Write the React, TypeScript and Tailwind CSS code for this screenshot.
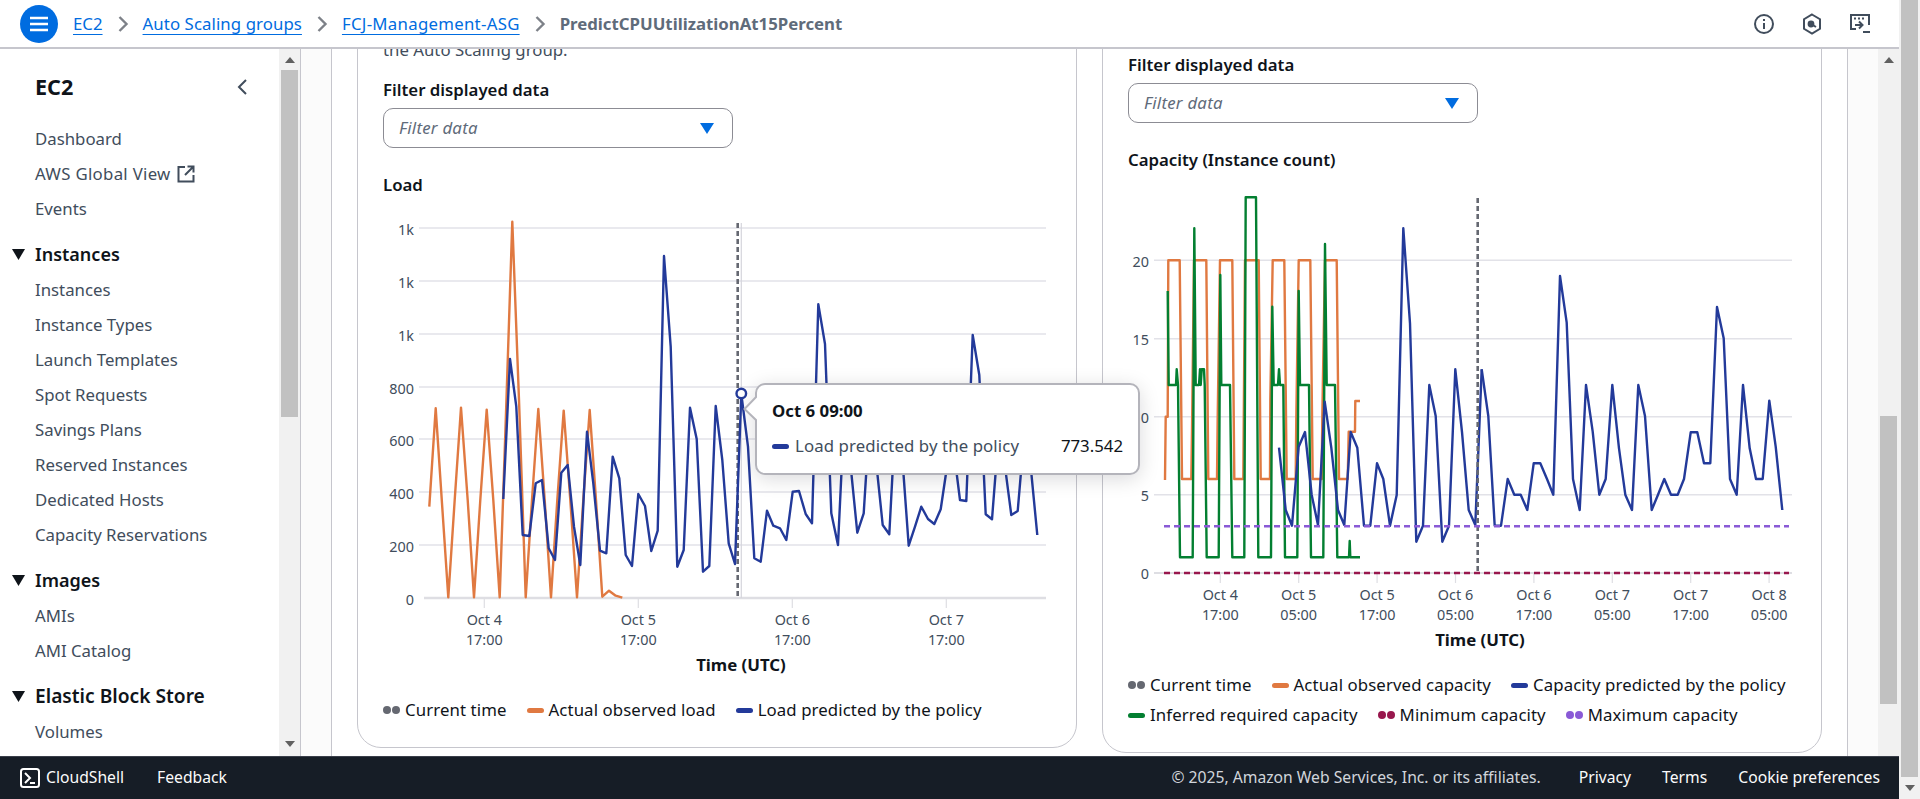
import React from "react";

const FONT = "'Noto Sans', 'Open Sans', sans-serif";
const BLUE = "#233a9a";
const ORANGE = "#e07941";
const GREEN = "#037f31";
const PURPLE = "#8a5ad6";
const RED = "#98174d";
const GRID = "#e2e2e8";
const AXIS = "#414d5c";

// Points read in 3x crop coordinates, converted to page coordinates below.
type P = [number, number];
const toPts = (pts: P[], ox: number, oy: number) =>
  pts.map(([x, y]) => `${(ox + x / 3).toFixed(1)},${(oy + y / 3).toFixed(1)}`).join(" ");

const loadOrange: P[] = [[268,920],[287,625],[306,910],[325,1192],[344,900],[363,623],[383,900],[402,1192],[421,900],[440,629],[460,900],[479,1192],[498,640],[517,65],[537,600],[557,1192],[576,900],[595,627],[614,900],[633,1192],[652,900],[671,632],[691,900],[711,1192],[730,900],[749,630],[768,900],[787,1190],[807,1172],[827,1187],[847,1193]];
const loadBlueA: P[] = [[490,897],[510,477],[529,620],[548,1005],[568,1008],[587,850],[606,840],[626,1045],[645,1080],[664,818],[683,795],[702,980],[721,1095],[741,695],[760,850],[780,1052],[799,1060],[818,770],[838,835],[857,1065],[876,1098],[895,882],[915,918],[934,1053],[953,992],[972,168],[992,440],[1012,1100],[1031,1050],[1050,623],[1070,717],[1089,1115],[1108,1098],[1127,618],[1147,780],[1166,1030],[1185,1092],[1204,582]];
const loadBlueB: P[] = [[124,582],[144,740],[163,1075],[182,1085],[201,932],[220,977],[240,985],[259,1020],[278,875],[297,873],[317,942],[336,970],[355,313],[375,432],[394,940],[414,1035],[433,640],[452,800],[472,998],[491,940],[510,640],[529,790],[548,975],[568,1003],[587,640],[606,760],[626,1037],[645,980],[664,920],[684,957],[703,972],[722,928],[741,800],[760,740],[780,900],[799,903],[818,405],[838,525],[857,943],[876,958],[896,700],[915,800],[934,945],[953,933],[973,700],[992,800],[1012,1005]];

const capOrange: P[] = [[165,900],[167,710],[173,710],[175,241],[209,241],[216,897],[244,897],[246,755],[252,241],[289,241],[295,897],[321,897],[323,710],[330,241],[367,241],[373,897],[400,897],[405,241],[446,241],[452,897],[480,897],[481,660],[488,241],[523,241],[530,897],[557,897],[559,710],[566,241],[601,241],[608,897],[635,897],[637,710],[645,241],[680,241],[687,897],[713,897],[716,755],[735,755],[736,663],[750,663]];
const capGreen: P[] = [[173,333],[176,615],[198,615],[200,568],[204,615],[210,1132],[248,1132],[253,145],[257,615],[267,615],[270,568],[272,615],[275,568],[282,568],[284,615],[290,1132],[326,1132],[331,285],[334,615],[360,615],[367,1132],[403,1132],[407,52],[438,52],[445,1132],[483,1132],[487,380],[491,615],[504,615],[507,568],[510,615],[520,615],[525,1132],[562,1132],[566,333],[570,615],[597,615],[603,1132],[640,1132],[645,192],[650,615],[675,615],[682,1132],[717,1132],[719,1083],[721,1132],[750,1132]];
const capBlueA: P[] = [[507,803],[527,990],[546,1037],[566,800],[585,756],[605,945],[624,1035],[644,665],[664,803],[684,990],[703,1035],[722,756],[742,803],[762,1037],[781,1037],[801,850],[820,897],[840,1037],[860,945],[880,145],[900,430],[919,1085],[939,1037],[958,615],[977,708],[997,1085],[1017,1037],[1036,568],[1056,756],[1076,990],[1096,1035],[1115,568]];
const capBlueB: P[] = [[5,568],[25,708],[44,1037],[63,1037],[83,897],[103,944],[122,944],[142,990],[161,850],[181,850],[201,897],[220,944],[240,288],[260,428],[279,897],[299,990],[318,615],[338,755],[358,944],[377,897],[397,615],[417,805],[436,944],[456,990],[475,615],[495,708],[515,990],[534,944],[553,897],[573,944],[593,944],[612,897],[632,757],[652,757],[672,850],[691,850],[711,381],[731,475],[750,897],[770,944],[789,615],[809,805],[828,897],[848,897],[868,662],[887,800],[907,990]];

function Line({ points, color, w = 2.4 }: { points: string; color: string; w?: number }) {
  return <polyline points={points} fill="none" stroke={color} strokeWidth={w} strokeLinejoin="round" />;
}

function AxisLabel({ x, y, children, anchor = "middle", weight = 400, fill = AXIS, size = 14.4 }: any) {
  return (
    <text x={x} y={y} textAnchor={anchor} fontSize={size} fontWeight={weight} fill={fill} fontFamily={FONT} dominantBaseline="central">
      {children}
    </text>
  );
}

// Load chart. viewBox is in page coordinates so values read from the reference apply directly.
function LoadChart() {
  const ys = [228, 281, 334, 387, 439, 492, 545];
  const labels = ["1k", "1k", "1k", "800", "600", "400", "200"];
  const ticks = [484.3, 638.3, 792.3, 946.3];
  return (
    <svg width={680} height={460} viewBox="380 215 680 460" className="block">
      {ys.map((y) => (
        <line key={y} x1={419} x2={1046} y1={y} y2={y} stroke={GRID} strokeWidth={1.5} />
      ))}
      <line x1={424} x2={1046} y1={598} y2={598} stroke="#dedee3" strokeWidth={2.4} />
      {ticks.map((x) => (
        <line key={x} x1={x} x2={x} y1={598} y2={608} stroke="#dedee3" strokeWidth={1.2} />
      ))}
      {ys.map((y, i) => (
        <AxisLabel key={y} x={414} y={y + 1} anchor="end">{labels[i]}</AxisLabel>
      ))}
      <AxisLabel x={414} y={599} anchor="end">0</AxisLabel>
      {ticks.map((x, i) => (
        <g key={x}>
          <AxisLabel x={x} y={619}>{["Oct 4", "Oct 5", "Oct 6", "Oct 7"][i]}</AxisLabel>
          <AxisLabel x={x} y={639}>17:00</AxisLabel>
        </g>
      ))}
      <AxisLabel x={741} y={664} weight={700} fill="#0f141a" size={16.8}>Time (UTC)</AxisLabel>
      <line x1={741.3} x2={741.3} y1={223} y2={598} stroke="#d5d5dc" strokeWidth={1.2} />
      <line x1={737.7} x2={737.7} y1={223} y2={598} stroke="#656871" strokeWidth={2.6} strokeDasharray="5 3" />
      <Line points={toPts(loadOrange, 340, 200)} color={ORANGE} />
      <Line points={toPts(loadBlueA, 340, 200)} color={BLUE} />
      <Line points={toPts(loadBlueB, 700, 200)} color={BLUE} />
      <circle cx={741.3} cy={393.5} r={4.8} fill="#fff" stroke={BLUE} strokeWidth={2.4} />
    </svg>
  );
}

function CapacityChart() {
  const ys = [494.7, 416.7, 338.7, 260.3];
  const labels = ["5", "10", "15", "20"];
  const ticks = [0, 1, 2, 3, 4, 5, 6, 7].map((i) => 1220.3 + 78.4 * i);
  const l1 = ["Oct 4", "Oct 5", "Oct 5", "Oct 6", "Oct 6", "Oct 7", "Oct 7", "Oct 8"];
  const l2 = ["17:00", "05:00", "17:00", "05:00", "17:00", "05:00", "17:00", "05:00"];
  return (
    <svg width={700} height={470} viewBox="1120 190 700 470" className="block">
      {ys.map((y) => (
        <line key={y} x1={1154} x2={1792} y1={y} y2={y} stroke={GRID} strokeWidth={1.5} />
      ))}
      <line x1={1154} x2={1792} y1={573} y2={573} stroke="#dedee3" strokeWidth={2} />
      {ticks.map((x) => (
        <line key={x} x1={x} x2={x} y1={573} y2={583} stroke="#dedee3" strokeWidth={1.2} />
      ))}
      {ys.map((y, i) => (
        <AxisLabel key={y} x={1149} y={y + 1} anchor="end">{labels[i]}</AxisLabel>
      ))}
      <AxisLabel x={1149} y={573} anchor="end">0</AxisLabel>
      {ticks.map((x, i) => (
        <g key={x}>
          <AxisLabel x={x} y={594}>{l1[i]}</AxisLabel>
          <AxisLabel x={x} y={614}>{l2[i]}</AxisLabel>
        </g>
      ))}
      <AxisLabel x={1480} y={639} weight={700} fill="#0f141a" size={16.8}>Time (UTC)</AxisLabel>
      <Line points={toPts(capOrange, 1110, 180)} color={ORANGE} />
      <Line points={toPts(capGreen, 1110, 180)} color={GREEN} />
      <Line points={toPts(capBlueA, 1110, 180)} color={BLUE} />
      <Line points={toPts(capBlueB, 1480, 180)} color={BLUE} />
      <line x1={1477.7} x2={1477.7} y1={198} y2={573} stroke="#656871" strokeWidth={2.6} strokeDasharray="5 3" />
      <line x1={1164} x2={1789} y1={526.3} y2={526.3} stroke={PURPLE} strokeWidth={2.4} strokeDasharray="6 4" />
      <line x1={1164} x2={1789} y1={573} y2={573} stroke={RED} strokeWidth={2.4} strokeDasharray="6 4" />
    </svg>
  );
}

function Swatch({ color, dots }: { color: string; dots?: boolean }) {
  return dots ? (
    <span className="flex w-[17px] gap-[1px] mr-[5px] shrink-0">
      <span className="w-[8px] h-[8px] rounded-full" style={{ background: color }} />
      <span className="w-[8px] h-[8px] rounded-full" style={{ background: color }} />
    </span>
  ) : (
    <span className="w-[17px] h-[5px] rounded-full mr-[5px] shrink-0" style={{ background: color }} />
  );
}

function LegendItem({ color, dots, label }: { color: string; dots?: boolean; label: string }) {
  return (
    <span className="flex items-center whitespace-nowrap text-[16.8px] tracking-[0.1px] text-[#0f141a] leading-[24px]">
      <Swatch color={color} dots={dots} />
      {label}
    </span>
  );
}

function Select() {
  return (
    <div className="w-[350px] h-[40px] rounded-[10px] border border-[#8c8c94] flex items-center justify-between pl-[15px] pr-[18px]">
      <span className="italic text-[16.8px] tracking-[0.25px] text-[#5f6b7a]">Filter data</span>
      <svg width={14} height={11} viewBox="0 0 14 11"><path d="M0 0h14L7 11z" fill="#006ce0" /></svg>
    </div>
  );
}

function NavItem({ children, className = "" }: { children: React.ReactNode; className?: string }) {
  return <div className={`h-[35px] flex items-center pl-[35px] text-[16.8px] text-[#414d5c] ${className}`}>{children}</div>;
}

function NavGroup({ children, className = "text-[18px]" }: { children: React.ReactNode; className?: string }) {
  return (
    <div className={`h-[35px] flex items-center font-semibold text-[#0f141a] ${className}`}>
      <svg width={13} height={11} viewBox="0 0 13 11" className="ml-[12px] mr-[10px]"><path d="M0 0h13L6.5 11z" fill="#0f141a" /></svg>
      {children}
    </div>
  );
}

function ArrowUp() {
  return <svg width={10} height={6} viewBox="0 0 10 6"><path d="M5 0l5 6H0z" fill="#606060" /></svg>;
}
function ArrowDown() {
  return <svg width={10} height={6} viewBox="0 0 10 6"><path d="M0 0h10L5 6z" fill="#606060" /></svg>;
}

function Crumb({ children, className = "" }: { children: React.ReactNode; className?: string }) {
  return <a className={`text-[16.8px] text-[#006ce0] underline underline-offset-[4px] whitespace-nowrap ${className}`}>{children}</a>;
}
function Sep() {
  return (
    <svg width={12} height={18} viewBox="0 0 12 18" className="mx-[14px] shrink-0">
      <path d="M2.5 2l7 7-7 7" fill="none" stroke="#7d8188" strokeWidth={2.4} />
    </svg>
  );
}

export default function App() {
  return (
    <div className="w-[1920px] h-[799px] overflow-hidden flex bg-[#f1f1f1] relative" style={{ fontFamily: FONT }}>
      <div className="w-[1899px] h-full flex flex-col shrink-0">
        {/* Header */}
        <header className="h-[49px] shrink-0 bg-white border-b-2 border-[#c6c6cd] flex items-center pl-[20px]">
          <button className="w-[38px] h-[38px] rounded-full bg-[#006ce0] flex items-center justify-center shrink-0">
            <svg width={18} height={16} viewBox="0 0 18 16"><path d="M0 2h18M0 8h18M0 14h18" stroke="#fff" strokeWidth={2.4} /></svg>
          </button>
          <div className="flex items-center ml-[15px]">
            <Crumb>EC2</Crumb>
            <Sep />
            <Crumb className="tracking-[0.08px]">Auto Scaling groups</Crumb>
            <Sep />
            <Crumb className="tracking-[0.28px]">FCJ-Management-ASG</Crumb>
            <Sep />
            <span className="text-[16.8px] font-bold text-[#5f6b7a] whitespace-nowrap">PredictCPUUtilizationAt15Percent</span>
          </div>
          <div className="ml-auto flex items-center gap-[27px] pr-[28px]">
            <svg width={22} height={22} viewBox="0 0 22 22" fill="none" stroke="#414d5c" strokeWidth={2}>
              <circle cx={11} cy={11} r={9} />
              <path d="M11 10v6M11 6v2" />
            </svg>
            <svg width={20} height={22} viewBox="0 0 20 22" fill="none" stroke="#414d5c" strokeWidth={2}>
              <path d="M10 1.5l8 4.7v9.6l-8 4.7-8-4.7V6.2z" />
              <circle cx={9} cy={11} r={2.4} fill="#414d5c" />
              <path d="M10 11.5l4 2.5" />
            </svg>
            <svg width={22} height={22} viewBox="0 0 22 22" fill="none" stroke="#414d5c" strokeWidth={2}>
              <path d="M7 16H2V2h18v10" />
              <path d="M5 5.5h2M9 5.5h2M13 5.5h2" />
              <path d="M6 12h7M10 8.5l3.5 3.5-3.5 3.5" />
              <path d="M14 19h7" />
            </svg>
          </div>
        </header>

        {/* Body */}
        <div className="flex-1 flex min-h-0">
          {/* Sidebar */}
          <aside className="w-[279px] shrink-0 bg-white overflow-hidden">
            <div className="h-[50px] flex items-end justify-between pl-[35px] pr-[31px]">
              <span className="text-[21.6px] font-bold text-[#0f141a] leading-[24px]">EC2</span>
              <svg width={12} height={18} viewBox="0 0 12 18" className="mb-[3px]"><path d="M10 2L3 9l7 7" fill="none" stroke="#414d5c" strokeWidth={2} /></svg>
            </div>
            <div className="h-[22px]" />
            <NavItem>Dashboard</NavItem>
            <NavItem className="tracking-[0.3px]">
              AWS Global View
              <svg width={18} height={18} viewBox="0 0 18 18" fill="none" stroke="#414d5c" strokeWidth={2} className="ml-[6px]">
                <path d="M8 2H1.5v14.5h15V10" />
                <path d="M10.5 1.5h6v6M16 2L8 10" />
              </svg>
            </NavItem>
            <NavItem>Events</NavItem>
            <div className="h-[11px]" />
            <NavGroup>Instances</NavGroup>
            {["Instances", "Instance Types", "Launch Templates", "Spot Requests", "Savings Plans", "Reserved Instances", "Dedicated Hosts", "Capacity Reservations"].map((t) => (
              <NavItem key={t}>{t}</NavItem>
            ))}
            <div className="h-[11px]" />
            <NavGroup>Images</NavGroup>
            <NavItem>AMIs</NavItem>
            <NavItem>AMI Catalog</NavItem>
            <div className="h-[11px]" />
            <NavGroup className="text-[19.2px]">Elastic Block Store</NavGroup>
            <NavItem>Volumes</NavItem>
          </aside>

          {/* Sidebar scrollbar */}
          <div className="w-[21px] shrink-0 bg-[#f1f1f1] flex flex-col items-center">
            <div className="h-[21px] flex items-center justify-center"><ArrowUp /></div>
            <div className="w-[17px] h-[347px] bg-[#c1c1c1]" />
            <div className="flex-1 flex items-end justify-center pb-[9px]"><ArrowDown /></div>
          </div>

          {/* Main */}
          <main className="flex-1 flex min-w-0 bg-[#fbfbfb] border-l border-[#c6c6cd]">
            <div className="w-[30px] shrink-0" />
            <div className="w-[1517px] shrink-0 bg-white border-x border-[#c6c6cd] overflow-hidden relative">
              <div className="flex items-start gap-[25px] pl-[25px]">
                {/* Card 1 */}
                <section className="w-[720px] h-[780px] -mt-[81px] shrink-0 rounded-b-[24px] border border-[#c6c6cd] pl-[25px] flex flex-col">
                  <div className="h-[81px] shrink-0" />
                  <p className="text-[16.8px] leading-[20px] text-[#414d5c] -mt-[10px]">the Auto Scaling group.</p>
                  <div className="text-[16.8px] font-semibold text-[#0f141a] leading-[22px] mt-[19px]">Filter displayed data</div>
                  <div className="mt-[7px]"><Select /></div>
                  <div className="text-[16.8px] font-semibold text-[#0f141a] leading-[22px] mt-[26px]">Load</div>
                  <div className="-ml-[3px] mt-[19px]"><LoadChart /></div>
                  <div className="flex mt-[23px] gap-[20px]">
                    <LegendItem color="#656871" dots label="Current time" />
                    <LegendItem color={ORANGE} label="Actual observed load" />
                    <LegendItem color={BLUE} label="Load predicted by the policy" />
                  </div>
                </section>

                {/* Card 2 */}
                <section className="w-[720px] h-[785px] -mt-[81px] shrink-0 rounded-b-[24px] border border-[#c6c6cd] pl-[25px] flex flex-col">
                  <div className="h-[85px] shrink-0" />
                  <div className="text-[16.8px] font-semibold text-[#0f141a] leading-[22px]">Filter displayed data</div>
                  <div className="mt-[7px]"><Select /></div>
                  <div className="text-[16.8px] font-semibold text-[#0f141a] leading-[22px] mt-[26px]">Capacity (Instance count)</div>
                  <div className="-ml-[8px] mt-[19px]"><CapacityChart /></div>
                  <div className="flex flex-col gap-[6px] mt-[13px]">
                    <div className="flex gap-[20px]">
                      <LegendItem color="#656871" dots label="Current time" />
                      <LegendItem color={ORANGE} label="Actual observed capacity" />
                      <LegendItem color={BLUE} label="Capacity predicted by the policy" />
                    </div>
                    <div className="flex gap-[20px]">
                      <LegendItem color={GREEN} label="Inferred required capacity" />
                      <LegendItem color={RED} dots label="Minimum capacity" />
                      <LegendItem color={PURPLE} dots label="Maximum capacity" />
                    </div>
                  </div>
                </section>
              </div>
            </div>
            <div className="flex-1" />
            {/* Content scrollbar */}
            <div className="w-[21px] shrink-0 bg-[#f1f1f1] flex flex-col items-center">
              <div className="h-[21px] flex items-center justify-center"><ArrowUp /></div>
              <div className="flex-1" />
              <div className="w-[17px] h-[288px] bg-[#c1c1c1] mb-[52px]" />
            </div>
          </main>
        </div>

        {/* Footer */}
        <footer className="h-[43px] shrink-0 bg-[#161d26] border-t border-[#3a3f4a] flex items-center pl-[20px] text-[15.7px] text-[#fbfbfb]">
          <svg width={20} height={20} viewBox="0 0 20 20" fill="none" stroke="#fff" strokeWidth={2}>
            <rect x={1} y={1} width={18} height={18} rx={2.5} />
            <path d="M5 5l5 5-5 5M10 15h5" />
          </svg>
          <span className="ml-[6px]">CloudShell</span>
          <span className="ml-[33px]">Feedback</span>
          <span className="ml-auto text-[#d1d5db]">© 2025, Amazon Web Services, Inc. or its affiliates.</span>
          <span className="ml-[38px]">Privacy</span>
          <span className="ml-[31px]">Terms</span>
          <span className="ml-[31px] mr-[19px]">Cookie preferences</span>
        </footer>
      </div>

      {/* Outer page scrollbar */}
      <div className="flex-1 flex flex-col pl-[2px]">
        <div className="w-[17px] h-[777px] bg-[#c1c1c1]" />
        <div className="w-[17px] flex-1 flex items-center justify-center"><ArrowDown /></div>
      </div>

      {/* Chart tooltip */}
      <div className="absolute left-[755px] top-[383px] w-[385px] h-[92px] bg-white border-2 border-[#b4b4bb] rounded-[10px] shadow-[0_4px_20px_rgba(0,7,22,0.15)] pl-[15px] pr-[15px]">
        <svg width={14} height={26} viewBox="0 0 14 26" className="absolute -left-[14px] top-[11px]">
          <path d="M14 0L1.5 13 14 25" fill="#fff" stroke="#b4b4bb" strokeWidth={2} />
        </svg>
        <div className="text-[16.8px] font-bold text-[#0f141a] leading-[22px] mt-[15px]">Oct 6 09:00</div>
        <div className="flex items-center text-[16.8px] leading-[24px] mt-[12px]">
          <span className="w-[17px] h-[5px] rounded-full bg-[#233a9a] mr-[6px]" />
          <span className="text-[#414d5c] tracking-[0.1px]">Load predicted by the policy</span>
          <span className="ml-auto text-[#0f141a]">773.542</span>
        </div>
      </div>
    </div>
  );
}
